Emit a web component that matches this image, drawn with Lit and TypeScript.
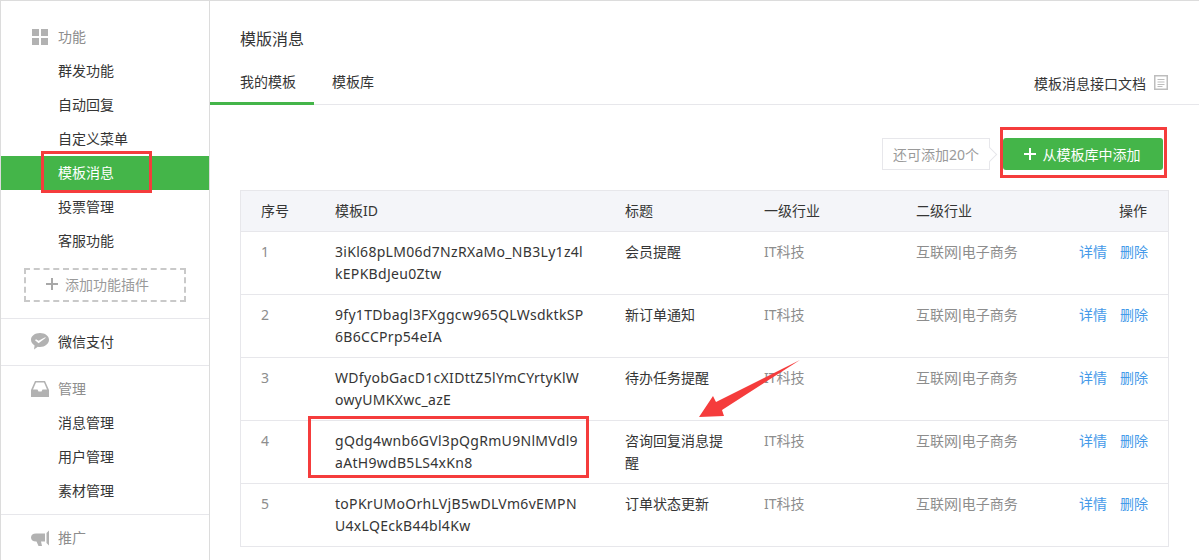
import { LitElement, html, css, svg } from "lit";
import { customElement } from "lit/decorators.js";

const rows = [
  ["1", "3iKl68pLM06d7NzRXaMo_NB3Ly1z4l", "kEPKBdJeu0Ztw", "会员提醒"],
  ["2", "9fy1TDbagl3FXggcw965QLWsdktkSP", "6B6CCPrp54eIA", "新订单通知"],
  ["3", "WDfyobGacD1cXIDttZ5lYmCYrtyKlW", "owyUMKXwc_azE", "待办任务提醒"],
  ["4", "gQdg4wnb6GVl3pQgRmU9NlMVdl9", "aAtH9wdB5LS4xKn8", "咨询回复消息提醒"],
  ["5", "toPKrUMoOrhLVjB5wDLVm6vEMPN", "U4xLQEckB44bl4Kw", "订单状态更新"],
];

@customElement("app-root")
export class AppRoot extends LitElement {
  static styles = css`
    :host {
      display: block;
      width: 1199px;
      height: 560px;
      overflow: hidden;
      position: relative;
      background: #fff;
      font-family: "Noto Sans", "Noto Sans CJK SC", sans-serif;
      font-size: 14px;
      color: #353535;
      box-sizing: border-box;
    }
    * { box-sizing: border-box; }
    .page {
      display: flex;
      height: 560px;
      border-top: 1px solid #dcdcdc;
      border-left: 1px solid #dcdcdc;
    }
    .side {
      width: 209px;
      flex: none;
      border-right: 1px solid #dcdcdc;
      padding-top: 19px;
    }
    .group { border-bottom: 1px solid #e7e7eb; }
    .group.last { border-bottom: 0; }
    .group.pay { padding: 5px 0 7px; }
    .group.manage { padding: 5px 0 7px; }
    .group.last { padding-top: 5px; }
    .head {
      display: flex;
      align-items: center;
      height: 34px;
      padding: 0 0 2px 30px;
      color: #8d8d8d;
    }
    .group.pay .head, .group.manage .head, .group.last .head { padding-bottom: 0; }
    .head.dark { color: #353535; }
    .head svg { width: 18px; height: 18px; margin-right: 9px; flex: none; fill: #b2b2b2; }
    .item {
      display: flex;
      align-items: center;
      height: 34px;
      padding: 0 0 2px 57px;
    }
    .group.manage .item { padding-bottom: 0; }
    .item.on { background: #44b549; color: #fff; }
    .plugin {
      display: flex;
      align-items: center;
      margin: 10px 23px 16px;
      padding: 0 0 2px 20px;
      gap: 7px;
      height: 34px;
      width: 162px;
      border: 2px dashed #c9c9c9;
      color: #9a9a9a;
    }
    .plugin svg { width: 12px; height: 12px; display: block; stroke: #a8a8a8; stroke-width: 2; }
    .main { flex: 1; min-width: 0; }
    .title {
      font-size: 16px;
      line-height: 24px;
      padding: 26px 0 0 30px;
    }
    .tabs {
      display: flex;
      align-items: stretch;
      height: 44px;
      margin-top: 10px;
      border-bottom: 1px solid #e7e7eb;
    }
    .tab {
      display: flex;
      align-items: center;
      padding: 0 18px 1px 30px;
      margin-bottom: -1px;
      width: 104px;
    }
    .tab.on { border-bottom: 3px solid #44b549; }
    .tab.plain { width: auto; padding-left: 18px; padding-bottom: 4px; }
    .doc {
      margin-left: auto;
      display: flex;
      align-items: center;
      padding: 0 31px 0 0;
      gap: 8px;
    }
    .doc svg { width: 14px; height: 15px; display: block; }
    .bar {
      display: flex;
      justify-content: flex-end;
      align-items: center;
      margin: 33px 36px 20px 0;
      height: 32px;
      gap: 13px;
    }
    .tip {
      position: relative;
      height: 32px;
      width: 108px;
      border: 1px solid #e7e7eb;
      color: #9a9a9a;
      display: flex;
      align-items: center;
      justify-content: center;
    }
    .tip::after {
      content: "";
      position: absolute;
      right: -6px;
      top: 10px;
      width: 10px;
      height: 10px;
      background: #fff;
      border-top: 1px solid #e7e7eb;
      border-right: 1px solid #e7e7eb;
      transform: rotate(45deg);
    }
    .btn {
      width: 160px;
      height: 32px;
      background: #44b549;
      border-radius: 3px;
      color: #fff;
      display: flex;
      align-items: center;
      justify-content: center;
      gap: 7px;
      padding-right: 2px;
    }
    .btn svg { width: 12px; height: 12px; stroke: #fff; stroke-width: 2; display: block; }
    .table {
      width: 929px;
      margin-left: 30px;
      border: 1px solid #e7e7eb;
      display: grid;
      grid-template-columns: 74px 290px 139px 152px 163px 109px;
    }
    .cell {
      padding: 9px 0 9px 20px;
      line-height: 22px;
      border-bottom: 1px solid #e7e7eb;
      min-height: 62px;
    }
    .cell.th {
      background: #f4f5f9;
      min-height: 0;
      height: 41px;
    }
    .cell.last { border-bottom: 0; }
    .id { letter-spacing: 0.3px; }
    .id div { white-space: nowrap; }
    .name { padding-right: 20px; }
    .pipe { font-family: "Liberation Sans", sans-serif; }
    .num, .muted { color: #8d8d8d; }
    .ops { padding: 9px 20px 9px 0; text-align: right; color: #459ae9; }
    .ops.th { color: #353535; padding-right: 21px; }
    .ops span + span { margin-left: 13px; }
    .mark {
      position: absolute;
      border: 3px solid #f53c3c;
      pointer-events: none;
    }
    .m1 { left: 41px; top: 151px; width: 111px; height: 42px; }
    .m2 { left: 1000px; top: 127px; width: 167px; height: 51px; }
    .m3 { left: 308px; top: 416px; width: 281px; height: 62px; }
    .arrow { position: absolute; left: 695px; top: 355px; width: 110px; height: 65px; }
  `;

  private plus() {
    return html`<svg viewBox="0 0 12 12"><path d="M6 0v12M0 6h12" fill="none" /></svg>`;
  }

  render() {
    return html`
      <div class="page">
        <aside class="side">
          <div class="group">
            <div class="head">
              <svg viewBox="0 0 18 18"><path d="M1 2h7v7H1zM10 2h7v7h-7zM1 11h7v7H1zM10 11h7v7h-7z" /></svg>
              功能
            </div>
            <div class="item">群发功能</div>
            <div class="item">自动回复</div>
            <div class="item">自定义菜单</div>
            <div class="item on">模板消息</div>
            <div class="item">投票管理</div>
            <div class="item">客服功能</div>
            <div class="plugin">${this.plus()}添加功能插件</div>
          </div>
          <div class="group pay">
            <div class="head dark">
              <svg viewBox="0 0 18 18"><path d="M9 1C4 1 0 3.800 0 7.800c0 2.400 1.400 4.400 3.600 5.700L3 17.500l3.800-2.700c.7.100 1.400.2 2.200.2 5 0 9-3.200 9-7.200S14 1 9 1zM7.600 11.200 4 8.200l1-1 2.600 1.600 6.600-3.600.6.600z" fill-rule="evenodd"/></svg>
              微信支付
            </div>
          </div>
          <div class="group manage">
            <div class="head">
              <svg viewBox="0 0 18 18"><path d="M4 2h10l4 9v7H0v-7zM5 3.500 2 10.500h4.500l1 2h3l1-2H16l-3-7z" fill-rule="evenodd"/></svg>
              管理
            </div>
            <div class="item">消息管理</div>
            <div class="item">用户管理</div>
            <div class="item">素材管理</div>
          </div>
          <div class="group last">
            <div class="head">
              <svg viewBox="0 0 18 18"><path d="M14 5.500v8h-4l1 4.500H7.500l-2-4.500H5c-3 0-5-1.500-5-4s2-4 5-4z"/><path d="M15.500 5 18 2.500v15L15.500 15z"/></svg>
              推广
            </div>
          </div>
        </aside>
        <main class="main">
          <div class="title">模版消息</div>
          <div class="tabs">
            <div class="tab on">我的模板</div>
            <div class="tab plain">模板库</div>
            <div class="doc">
              <span>模板消息接口文档</span>
              <svg viewBox="0 0 14 15">
                <path d="M0 0h14v15H0zM1.500 1.500v12h11v-12z" fill="#bdbdbd" fill-rule="evenodd"/>
                <path d="M3.500 4.500h7M3.500 7h7M3.500 9.500h7M3.500 11.500h5" stroke="#bdbdbd" fill="none"/>
              </svg>
            </div>
          </div>
          <div class="bar">
            <div class="tip">还可添加20个</div>
            <div class="btn">${this.plus()}从模板库中添加</div>
          </div>
          <div class="table">
            <div class="cell th">序号</div>
            <div class="cell th">模板ID</div>
            <div class="cell th">标题</div>
            <div class="cell th">一级行业</div>
            <div class="cell th">二级行业</div>
            <div class="cell th ops">操作</div>
            ${rows.map((r, i) => {
              const l = i === rows.length - 1 ? "last" : "";
              return html`
                <div class="cell num ${l}">${r[0]}</div>
                <div class="cell id ${l}"><div>${r[1]}</div><div>${r[2]}</div></div>
                <div class="cell name ${l}">${r[3]}</div>
                <div class="cell muted ${l}">IT科技</div>
                <div class="cell muted ${l}">互联网<span class="pipe">|</span>电子商务</div>
                <div class="cell ops ${l}"><span>详情</span><span>删除</span></div>
              `;
            })}
          </div>
        </main>
      </div>
      <div class="mark m1"></div>
      <div class="mark m2"></div>
      <div class="mark m3"></div>
      <svg class="arrow" viewBox="0 0 110 65">
        ${svg`<path d="M105 5 L21 47 L18 41 L4 62 L29 61 L27 55 Z" fill="#f53c3c"/>`}
      </svg>
    `;
  }
}
